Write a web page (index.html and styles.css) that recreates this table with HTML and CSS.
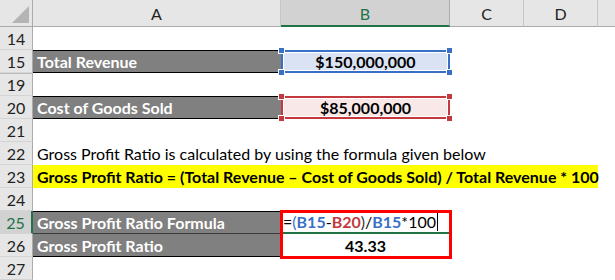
FILE: index.html
```html
<!DOCTYPE html>
<html>
<head>
<meta charset="utf-8">
<link rel="stylesheet" href="styles.css">
</head>
<body>
<div class="sheet">
  <div class="row hdr">
    <div class="corner"><span class="tri"></span></div>
    <div class="ch">A</div>
    <div class="ch sel">B</div>
    <div class="ch">C</div>
    <div class="ch">D</div>
    <div class="ch last"></div>
  </div>

  <div class="row"><div class="rh">14</div></div>

  <div class="row">
    <div class="rh">15</div>
    <div class="c lab">Total Revenue</div>
    <div class="c ref blue"><span class="val">$150,000,000</span><i class="k tl"></i><i class="k bl"></i><i class="k tr"></i><i class="k br"></i></div>
  </div>

  <div class="row gap"><div class="rh">19</div></div>

  <div class="row">
    <div class="rh">20</div>
    <div class="c lab">Cost of Goods Sold</div>
    <div class="c ref red"><span class="val">$85,000,000</span><i class="k tl"></i><i class="k bl"></i><i class="k tr"></i><i class="k br"></i></div>
  </div>

  <div class="row"><div class="rh">21</div></div>

  <div class="row">
    <div class="rh">22</div>
    <div class="c span plain">Gross Profit Ratio is calculated by using the formula given below</div>
  </div>

  <div class="row">
    <div class="rh">23</div>
    <div class="c span yellow">Gross Profit Ratio = (Total Revenue – Cost of Goods Sold) / Total Revenue * 100</div>
  </div>

  <div class="row"><div class="rh">24</div></div>

  <div class="pair">
    <div class="row">
      <div class="rh active">25</div>
      <div class="c lab top">Gross Profit Ratio Formula</div>
      <div class="c formula">=<span class="b">(</span><b class="b">B15</b>-<b class="r">B20</b><span class="d">)</span>/<b class="b">B15</b>*100<span class="caret"></span></div>
    </div>
    <div class="row">
      <div class="rh">26</div>
      <div class="c lab mid">Gross Profit Ratio</div>
      <div class="c result">43.33</div>
    </div>
    <div class="redbox"></div>
  </div>

  <div class="row"><div class="rh">27</div></div>
</div>
</body>
</html>
```

FILE: styles.css
```css
* { box-sizing: border-box; }
html, body { margin: 0; padding: 0; background: #fff; }
body {
  width: 615px;
  height: 280px;
  overflow: hidden;
  font-family: "Lato", "Liberation Sans", sans-serif;
  font-size: 16px;
  color: #000;
}
.sheet { width: 615px; }
.row {
  display: grid;
  grid-template-columns: 33px 248px 169px 74px 74px 17px;
  height: 23px;
  position: relative;
}
.hdr { height: 27px; }
.corner {
  background: #e6e6e6;
  border-right: 1px solid #ababab;
  border-bottom: 1px solid #ababab;
  position: relative;
}
.tri {
  position: absolute;
  right: 3px;
  bottom: 3px;
  width: 0;
  height: 0;
  border-left: 17px solid transparent;
  border-bottom: 17px solid #b4b4b4;
}
.ch {
  background: #e6e6e6;
  border-right: 1px solid #c6c6c6;
  border-bottom: 1px solid #ababab;
  display: flex;
  align-items: center;
  justify-content: center;
  font-size: 16px;
  color: #222;
  padding-top: 1px;
}
.ch.sel {
  background: #d2d2d2;
  color: #217346;
  border-bottom: 2px solid #217346;
  border-right-color: #ababab;
}
.ch.last { border-right: none; }
.rh {
  grid-column: 1;
  background: #e6e6e6;
  border-right: 1px solid #ababab;
  border-bottom: 1px solid #d4d4d4;
  display: flex;
  align-items: center;
  justify-content: center;
  font-size: 16px;
  color: #222;
}
.gap .rh { border-top: 1px solid #bdbdbd; }
.rh.active {
  background: #d2d2d2;
  color: #217346;
  border-right: 2px solid #217346;
}
.c {
  display: flex;
  align-items: center;
  white-space: nowrap;
  padding-left: 4px;
}
.lab {
  grid-column: 2;
  background: #808080;
  color: #fff;
  font-weight: bold;
  border-top: 1px solid #000;
  border-bottom: 1px solid #000;
}
.lab.top { border-bottom-color: #3c3c3c; }
.lab.mid { border-top: none; }
.ref {
  grid-column: 3;
  justify-content: center;
  font-weight: bold;
  position: relative;
  border: 2px solid;
  box-shadow: inset 0 0 0 1px #fff;
  padding-left: 0;
}
.ref.blue { border-color: #3a6fc6; background: #dae3f3; }
.ref.red { border-color: #c3393e; background: #f9e8e8; }
.k {
  position: absolute;
  width: 5px;
  height: 5px;
  border: 1px solid #fff;
  box-sizing: content-box;
}
.blue .k { background: #3a6fc6; }
.red .k { background: #c3393e; }
.k.tl { left: -5px; top: -5px; }
.k.bl { left: -5px; bottom: -5px; }
.k.tr { right: -5px; top: -5px; }
.k.br { right: -5px; bottom: -5px; }
.span { grid-column: 2 / 6; }
.yellow { background: #ffff00; font-weight: bold; }
.pair { position: relative; }
.formula {
  grid-column: 3;
  padding-left: 2px;
  border-bottom: 2px solid #217346;
  position: relative;
}
.formula b { font-weight: bold; }
.formula .b { color: #3a6fc6; }
.formula .r { color: #c3393e; }
.formula .d { color: #333; }
.caret {
  display: inline-block;
  width: 1px;
  height: 18px;
  background: #000;
  margin-left: 1px;
}
.result {
  grid-column: 3;
  justify-content: center;
  font-weight: bold;
  padding-left: 0;
}
.redbox {
  position: absolute;
  left: 280px;
  top: -1px;
  width: 172px;
  height: 49px;
  border: 3px solid #ff0000;
  pointer-events: none;
}
```
